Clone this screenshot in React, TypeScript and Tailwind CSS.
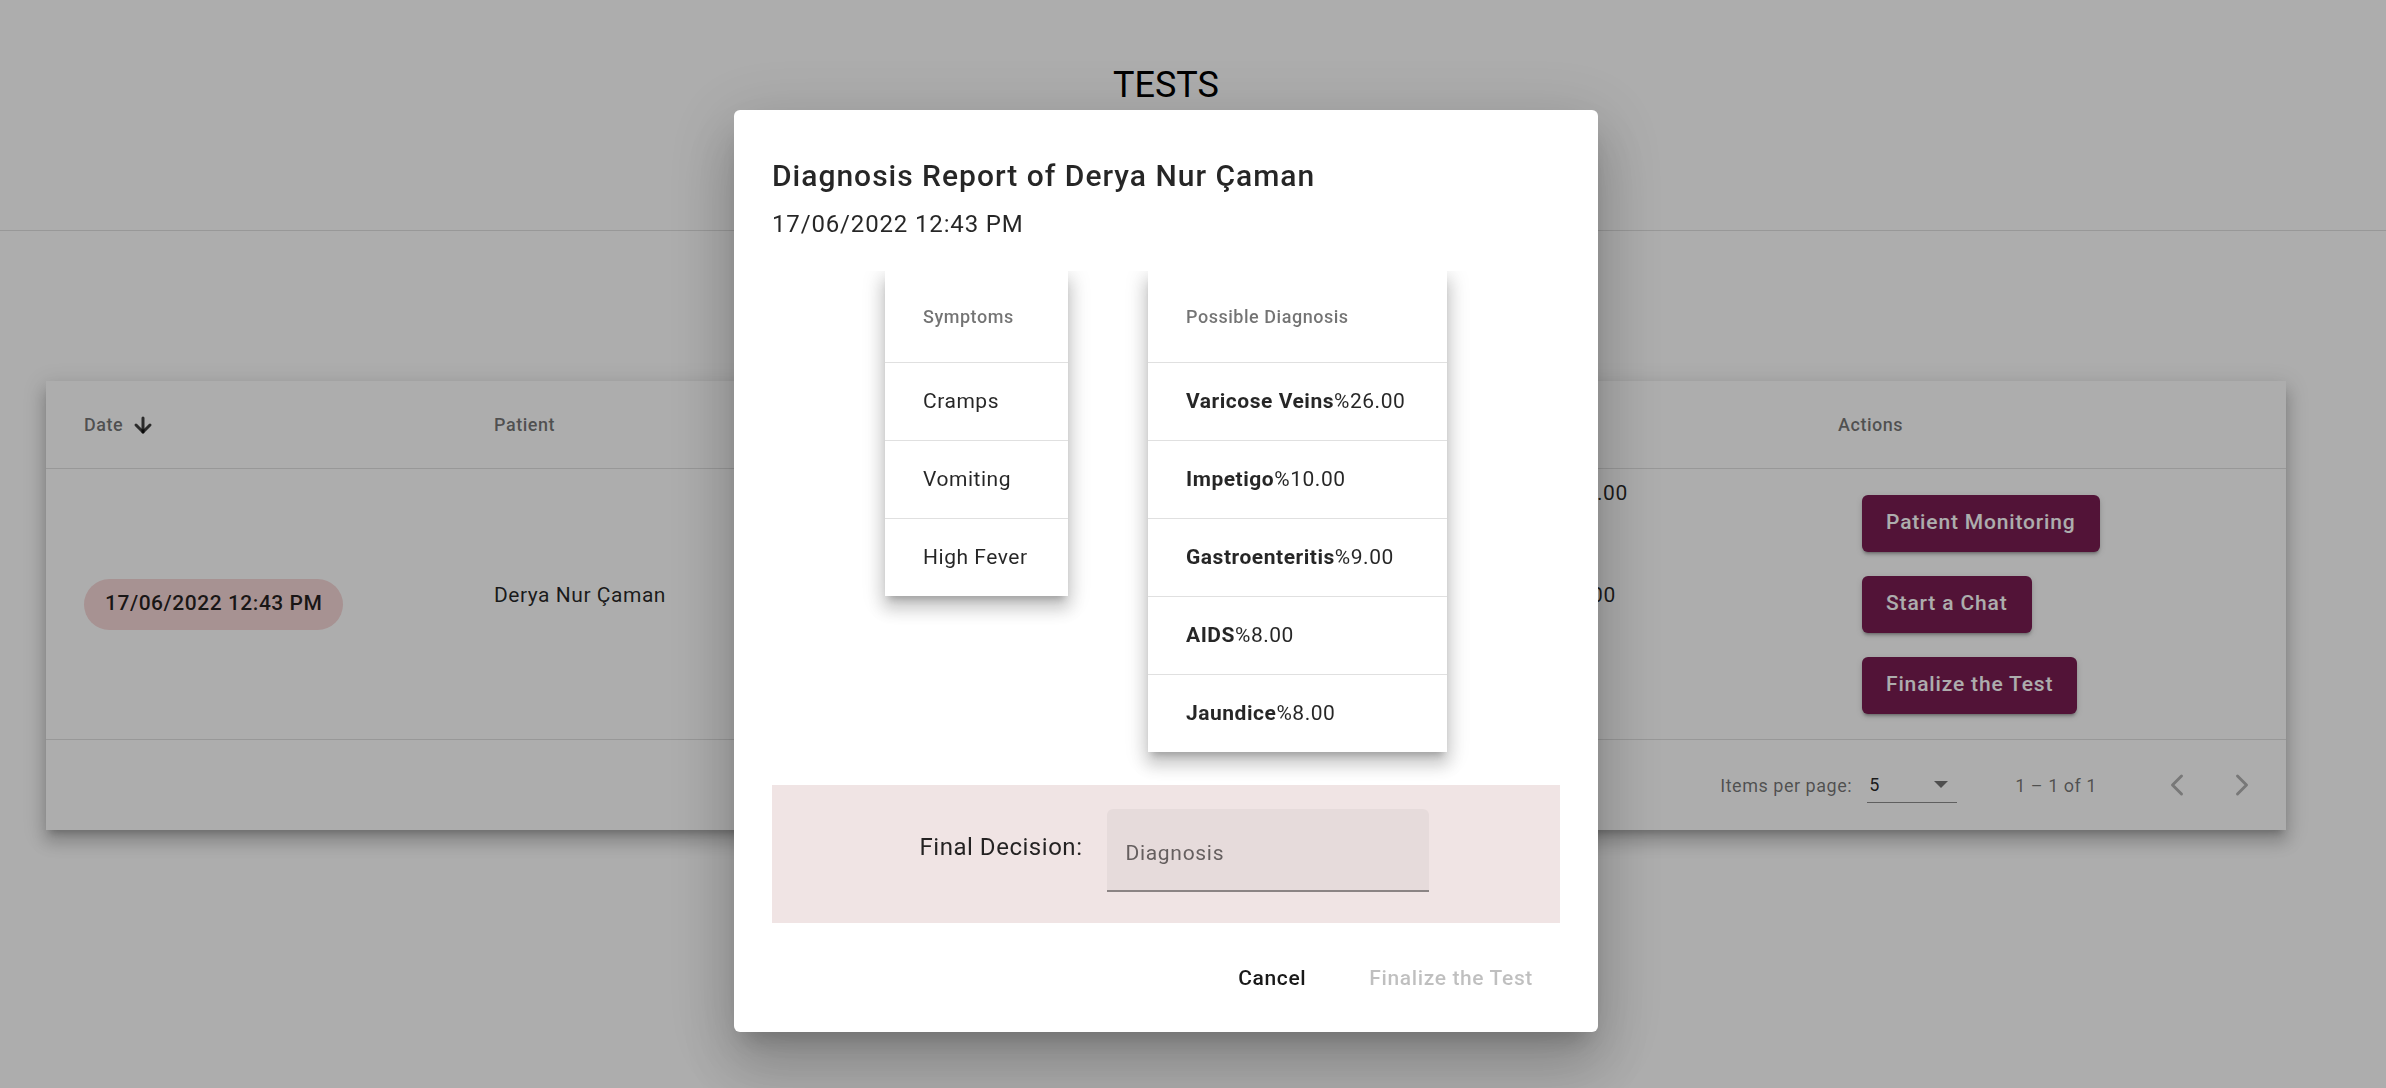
import React, { useState } from "react";
import { ArrowDown, ChevronLeft, ChevronRight } from "lucide-react";

const symptoms = ["Cramps", "Vomiting", "High Fever"];

const diagnoses = [
  { name: "Varicose Veins", pct: "26.00" },
  { name: "Impetigo", pct: "10.00" },
  { name: "Gastroenteritis", pct: "9.00" },
  { name: "AIDS", pct: "8.00" },
  { name: "Jaundice", pct: "8.00" },
];

function TestsTable() {
  return (
    <div className="bg-white shadow-[0_7px_7px_-4px_rgba(0,0,0,0.2),0_12px_15px_2px_rgba(0,0,0,0.14),0_5px_21px_3px_rgba(0,0,0,0.12)]">
      {/* header */}
      <div className="grid h-[88px] grid-cols-[410px_410px_501px_433px_1fr] items-center border-b border-[#e0e0e0] pl-[38px] text-[18px] font-medium text-black/55">
        <div className="flex items-center gap-[8px]">
          Date
          <ArrowDown size={24} strokeWidth={3} className="text-black/75" />
        </div>
        <div>Patient</div>
        <div>Symptoms</div>
        <div>Possible Diagnosis</div>
        <div>Actions</div>
      </div>

      {/* row */}
      <div className="grid h-[271px] grid-cols-[410px_410px_501px_433px_1fr] items-center border-b border-[#e0e0e0] pl-[38px] text-[21px] text-black/85">
        <div>
          <span className="inline-flex h-[51px] items-center rounded-full bg-[#f7d7d7] px-[21px] font-medium">
            17/06/2022 12:43 PM
          </span>
        </div>
        <div>
          <p className="mb-[18px] leading-[33px]">Derya Nur Çaman</p>
        </div>
        <div>
          <p className="mb-[18px] leading-[33px]">Cramps, Vomiting, High Fever</p>
        </div>
        <div>
          {diagnoses.map((d) => (
            <p key={d.name} className="mb-[18px] leading-[33px]">
              {d.name} %{d.pct}
            </p>
          ))}
        </div>
        <div className="flex flex-col items-start gap-[24px] pl-[24px]">
          {["Patient Monitoring", "Start a Chat", "Finalize the Test"].map((label) => (
            <button
              key={label}
              className="h-[57px] rounded-[6px] bg-[#791d52] px-[24px] text-[21px] font-medium tracking-[0.04em] text-white shadow-[0_3px_2px_-2px_rgba(0,0,0,0.2),0_3px_3px_0_rgba(0,0,0,0.14),0_2px_7px_0_rgba(0,0,0,0.12)]"
            >
              {label}
            </button>
          ))}
        </div>
      </div>

      {/* paginator */}
      <div className="flex h-[90px] items-center justify-end pr-[14px] text-[18px] text-black/55">
        <span className="mr-[15px]">Items per page:</span>
        <div className="flex h-[36px] w-[90px] items-center justify-between border-b border-black/45 pl-[2px] pr-[9px]">
          <span className="text-black/85">5</span>
          <span className="h-0 w-0 border-x-[7.5px] border-t-[7.5px] border-x-transparent border-t-black/55" />
        </div>
        <span className="ml-[58px] mr-[50px]">1 – 1 of 1</span>
        <div className="flex gap-[5px] text-black/30">
          <button className="flex h-[60px] w-[60px] items-center justify-center">
            <ChevronLeft size={36} strokeWidth={2} />
          </button>
          <button className="flex h-[60px] w-[60px] items-center justify-center">
            <ChevronRight size={36} strokeWidth={2} />
          </button>
        </div>
      </div>
    </div>
  );
}

function DiagnosisDialog() {
  const [decision, setDecision] = useState("");

  return (
    <div className="w-[864px] rounded-[6px] bg-white pb-[26px] pt-[42px] text-black/85 shadow-[0_16px_22px_-10px_rgba(0,0,0,0.2),0_36px_57px_5px_rgba(0,0,0,0.14),0_14px_69px_12px_rgba(0,0,0,0.12)]">
      <div className="px-[38px]">
        <h2 className="text-[30px] font-medium leading-[48px] tracking-[1px]">Diagnosis Report of Derya Nur Çaman</h2>
        <div className="mt-[6px] text-[24px] leading-[36px] tracking-[0.85px]">17/06/2022 12:43 PM</div>

        {/* tables */}
        <div className="mt-[29px] flex items-start justify-center gap-[80px] overflow-hidden pb-[33px]">
          <div className="w-[183px] bg-white shadow-[0_7px_7px_-4px_rgba(0,0,0,0.2),0_12px_15px_2px_rgba(0,0,0,0.14),0_5px_21px_3px_rgba(0,0,0,0.12)]">
            <div className="flex h-[91px] items-center pl-[38px] text-[18px] font-medium text-black/55">Symptoms</div>
            {symptoms.map((s) => (
              <div key={s} className="flex h-[78px] items-center border-t border-[#e0e0e0] pl-[38px] text-[21px]">
                {s}
              </div>
            ))}
          </div>

          <div className="w-[299px] bg-white shadow-[0_7px_7px_-4px_rgba(0,0,0,0.2),0_12px_15px_2px_rgba(0,0,0,0.14),0_5px_21px_3px_rgba(0,0,0,0.12)]">
            <div className="flex h-[91px] items-center pl-[38px] text-[18px] font-medium text-black/55">Possible Diagnosis</div>
            {diagnoses.map((d) => (
              <div key={d.name} className="flex h-[78px] items-center border-t border-[#e0e0e0] pl-[38px] text-[21px]">
                <b className="font-bold">{d.name}</b>%{d.pct}
              </div>
            ))}
          </div>
        </div>

        {/* final decision */}
        <div className="flex h-[138px] items-center justify-center gap-[25px] bg-[#f0e4e4] pl-[17px]">
          <label htmlFor="decision" className="mb-[14px] text-[24px]">
            Final Decision:
          </label>
          <div className="pb-[7px]">
            <div className="flex h-[83px] w-[322px] items-center rounded-t-[6px] border-b-2 border-[#8b8484] bg-black/[0.04] px-[18px] pt-[9px]">
              <input
                id="decision"
                value={decision}
                onChange={(e) => setDecision(e.target.value)}
                placeholder="Diagnosis"
                className="w-full bg-transparent text-[21px] tracking-[0.033em] outline-none placeholder:text-[#655f5f]"
              />
            </div>
          </div>
        </div>
      </div>

      {/* actions */}
      <div className="mt-[29px] flex justify-end gap-[15px] pr-[41px]">
        <button className="h-[54px] rounded-[6px] px-[24px] text-[21px] font-medium tracking-[0.03em] text-black/90">
          Cancel
        </button>
        <button disabled className="h-[54px] rounded-[6px] px-[24px] text-[21px] font-medium tracking-[0.03em] text-black/25">
          Finalize the Test
        </button>
      </div>
    </div>
  );
}

export default function App() {
  return (
    <div className="relative h-screen overflow-hidden bg-white font-['Roboto',sans-serif] tracking-[0.033em] text-black/85">
      <div className="h-[231px] border-b border-[#e0e0e0]">
        <div className="flex w-[2332px] justify-center pt-[67px]">
          <h1 className="text-[36px] leading-none tracking-normal text-black">TESTS</h1>
        </div>
      </div>

      <div className="w-[2332px] px-[46px] pt-[150px]">
        <TestsTable />
      </div>

      {/* dialog */}
      <div className="fixed inset-0 bg-black/[0.32]" />
      <div className="fixed inset-0 flex items-start justify-center pr-[54px] pt-[110px]">
        <DiagnosisDialog />
      </div>
    </div>
  );
}
